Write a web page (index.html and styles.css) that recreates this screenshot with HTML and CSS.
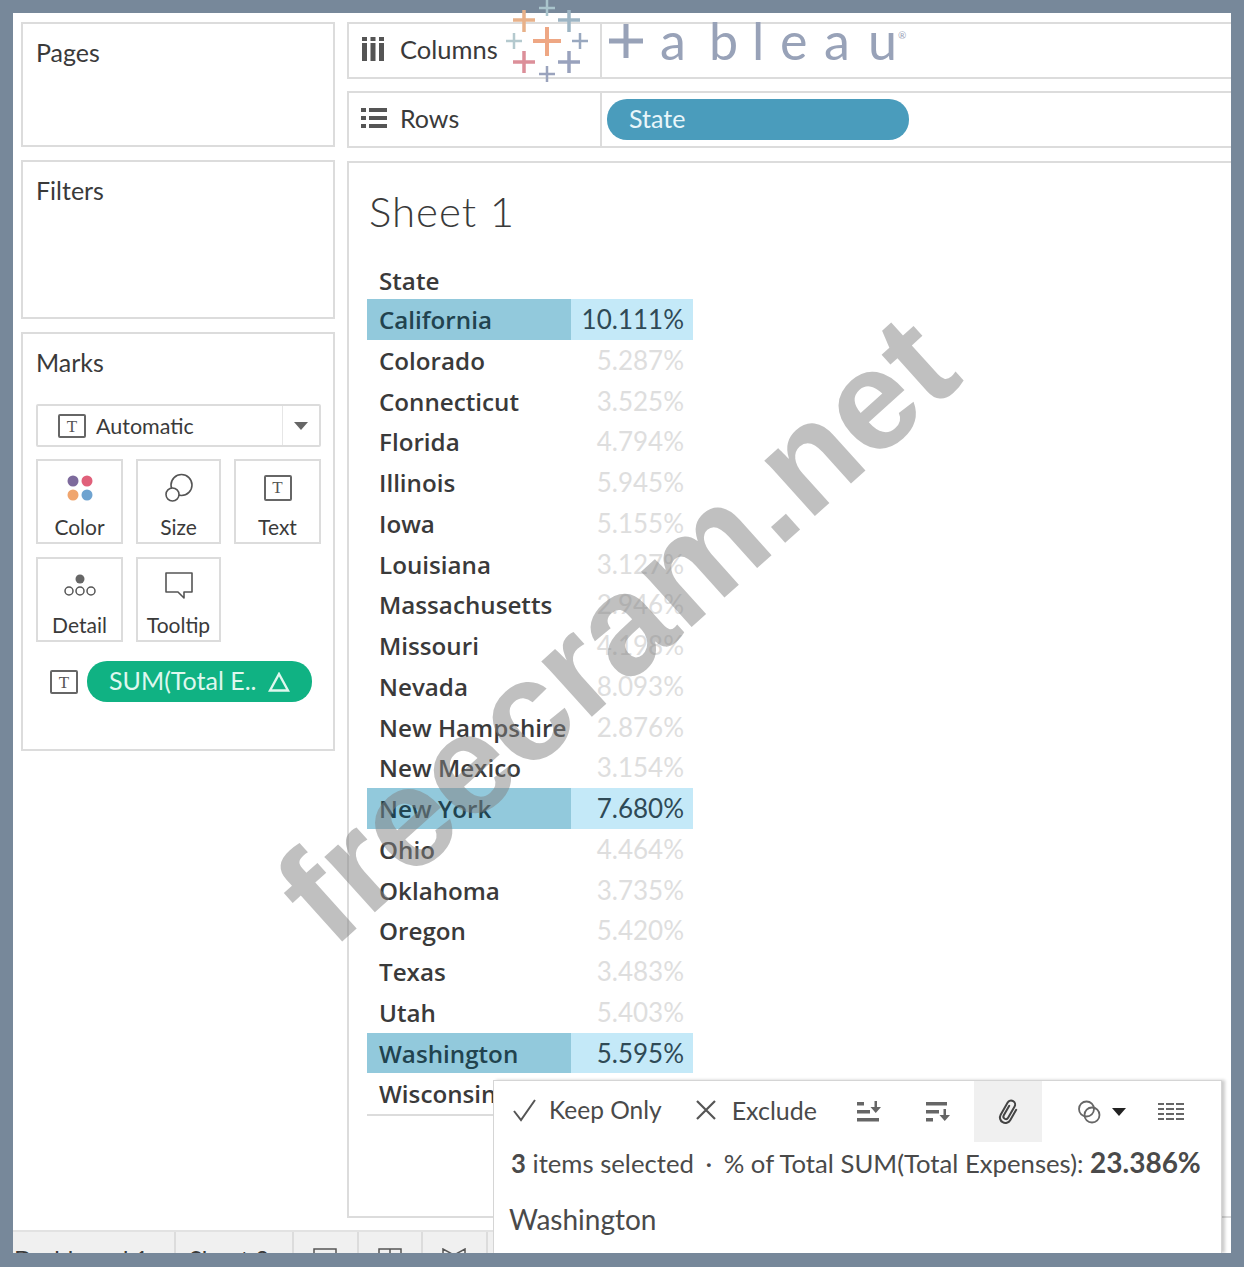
FILE: index.html

```html
<!DOCTYPE html>
<html>
<head>
    <meta charset="utf-8">
    <title>Sheet 1</title>
    <link rel="stylesheet" href="styles.css">
</head>
<body>
    <div class="frame">
        <div class="workspace">
            <div class="side">
                <div class="card pages-card"><div class="card-title">Pages</div></div>
                <div class="card filters-card"><div class="card-title">Filters</div></div>
                <div class="card marks-card">
                    <div class="card-title">Marks</div>
                    <div class="mark-select">
                        <div class="mark-select-label">
                            <span class="t-icon">T</span>
                            <span>Automatic</span>
                        </div>
                        <div class="mark-select-arrow"><span class="caret"></span></div>
                    </div>
                    <div class="mark-grid">
                        <div class="mark-btn">
                            <svg width="30" height="30" viewBox="0 0 30 30">
                                <circle cx="8" cy="8" r="5.5" fill="#7d6a9c"/>
                                <circle cx="22" cy="8" r="5.5" fill="#e0607a"/>
                                <circle cx="8" cy="22" r="5.5" fill="#f0a56e"/>
                                <circle cx="22" cy="22" r="5.5" fill="#6fa3d0"/>
                            </svg>
                            <span>Color</span>
                        </div>
                        <div class="mark-btn">
                            <svg width="30" height="30" viewBox="0 0 30 30" fill="none" stroke="#555" stroke-width="1.6">
                                <circle cx="17.5" cy="12" r="10.5"/>
                                <circle cx="8.5" cy="21.5" r="6.5" fill="#fff"/>
                            </svg>
                            <span>Size</span>
                        </div>
                        <div class="mark-btn">
                            <span class="t-icon">T</span>
                            <span>Text</span>
                        </div>
                        <div class="mark-btn">
                            <svg width="34" height="30" viewBox="0 0 34 30" fill="none" stroke="#555" stroke-width="1.5">
                                <circle cx="17" cy="8" r="4.5" fill="#666" stroke="none"/>
                                <circle cx="6" cy="20" r="4"/>
                                <circle cx="17" cy="20" r="4"/>
                                <circle cx="28" cy="20" r="4"/>
                            </svg>
                            <span>Detail</span>
                        </div>
                        <div class="mark-btn">
                            <svg width="30" height="30" viewBox="0 0 30 30" fill="none" stroke="#555" stroke-width="1.6">
                                <path d="M2 2h26v19h-8v6l-6-6H2z" stroke-linejoin="round"/>
                            </svg>
                            <span>Tooltip</span>
                        </div>
                    </div>
                    <div class="mark-pill-row">
                        <span class="t-icon">T</span>
                        <div class="pill pill-green">
                            <span>SUM(Total E..</span>
                            <svg width="22" height="20" viewBox="0 0 22 20" fill="none" stroke="#dff7ee" stroke-width="2.4">
                                <path d="M11 2 20 18.5H2z"/>
                            </svg>
                        </div>
                    </div>
                </div>
            </div>

            <div class="main">
                <div class="shelf columns-shelf">
                    <div class="shelf-label">
                        <svg width="24" height="26" viewBox="0 0 24 26" fill="#555">
                            <rect x="1" y="1" width="5" height="4"/><rect x="1" y="7" width="5" height="18"/>
                            <rect x="9.5" y="1" width="5" height="4"/><rect x="9.5" y="7" width="5" height="18"/>
                            <rect x="18" y="1" width="5" height="4"/><rect x="18" y="7" width="5" height="18"/>
                        </svg>
                        <span>Columns</span>
                    </div>
                </div>
                <div class="shelf rows-shelf">
                    <div class="shelf-label">
                        <svg width="26" height="22" viewBox="0 0 26 22" fill="#555">
                            <rect x="0" y="1" width="5" height="4"/><rect x="8" y="1" width="18" height="4"/>
                            <rect x="0" y="9" width="5" height="4"/><rect x="8" y="9" width="18" height="4"/>
                            <rect x="0" y="17" width="5" height="4"/><rect x="8" y="17" width="18" height="4"/>
                        </svg>
                        <span>Rows</span>
                    </div>
                    <div class="pill pill-blue">State</div>
                </div>

                <div class="sheet">
                    <h1 class="sheet-title">Sheet 1</h1>
                    <div class="state-table">
                        <div class="state-head">State</div>
                        <div class="state-row selected"><span class="state">California</span><span class="val">10.111%</span></div>
                        <div class="state-row"><span class="state">Colorado</span><span class="val">5.287%</span></div>
                        <div class="state-row"><span class="state">Connecticut</span><span class="val">3.525%</span></div>
                        <div class="state-row"><span class="state">Florida</span><span class="val">4.794%</span></div>
                        <div class="state-row"><span class="state">Illinois</span><span class="val">5.945%</span></div>
                        <div class="state-row"><span class="state">Iowa</span><span class="val">5.155%</span></div>
                        <div class="state-row"><span class="state">Louisiana</span><span class="val">3.127%</span></div>
                        <div class="state-row"><span class="state">Massachusetts</span><span class="val">2.946%</span></div>
                        <div class="state-row"><span class="state">Missouri</span><span class="val">4.198%</span></div>
                        <div class="state-row"><span class="state">Nevada</span><span class="val">8.093%</span></div>
                        <div class="state-row"><span class="state">New Hampshire</span><span class="val">2.876%</span></div>
                        <div class="state-row"><span class="state">New Mexico</span><span class="val">3.154%</span></div>
                        <div class="state-row selected"><span class="state">New York</span><span class="val">7.680%</span></div>
                        <div class="state-row"><span class="state">Ohio</span><span class="val">4.464%</span></div>
                        <div class="state-row"><span class="state">Oklahoma</span><span class="val">3.735%</span></div>
                        <div class="state-row"><span class="state">Oregon</span><span class="val">5.420%</span></div>
                        <div class="state-row"><span class="state">Texas</span><span class="val">3.483%</span></div>
                        <div class="state-row"><span class="state">Utah</span><span class="val">5.403%</span></div>
                        <div class="state-row selected"><span class="state">Washington</span><span class="val">5.595%</span></div>
                        <div class="state-row last"><span class="state">Wisconsin</span><span class="val"></span></div>
                    </div>
                </div>
            </div>
        </div>

        <div class="tabs">
            <div class="tab tab-dash">Dashboard 1</div>
            <div class="tab tab-sheet">Sheet 2</div>
            <div class="tab tab-icon">
                <svg width="24" height="12" viewBox="0 0 24 12" fill="none" stroke="#555" stroke-width="1.5"><path d="M1 12V1h22v11"/></svg>
            </div>
            <div class="tab tab-icon">
                <svg width="24" height="12" viewBox="0 0 24 12" fill="none" stroke="#555" stroke-width="1.5"><path d="M1 12V1h22v11M12 1v11M1 6h22"/></svg>
            </div>
            <div class="tab tab-icon">
                <svg width="24" height="12" viewBox="0 0 24 12" fill="none" stroke="#555" stroke-width="1.5"><path d="M1 12V1l11 6 11-6v11"/></svg>
            </div>
        </div>

        <div class="watermark">freecram.net</div>

        <div class="tooltip">
            <div class="tip-bar">
                <div class="tip-action tip-keep">
                    <svg width="26" height="24" viewBox="0 0 26 24" fill="none" stroke="#555" stroke-width="2"><path d="M2 13l7 9L23 2"/></svg>
                    <span>Keep Only</span>
                </div>
                <div class="tip-action tip-exclude">
                    <svg width="24" height="24" viewBox="0 0 24 24" fill="none" stroke="#555" stroke-width="2.2"><path d="M3 3l18 18M21 3L3 21"/></svg>
                    <span>Exclude</span>
                </div>
                <div class="tip-icon sort-asc">
                    <svg width="26" height="24" viewBox="0 0 26 24" fill="#666">
                        <rect x="1" y="2" width="7" height="3.500"/><rect x="1" y="10" width="13" height="3.500"/><rect x="1" y="18" width="22" height="3.500"/>
                        <path d="M18.500 1h2.500v6h4l-5.250 6-5.250-6h4z"/>
                    </svg>
                </div>
                <div class="tip-icon sort-desc">
                    <svg width="26" height="24" viewBox="0 0 26 24" fill="#666">
                        <rect x="1" y="2" width="21" height="3.500"/><rect x="1" y="10" width="13" height="3.500"/><rect x="1" y="18" width="7" height="3.500"/>
                        <path d="M18.500 9h2.500v6h4l-5.250 6-5.250-6h4z"/>
                    </svg>
                </div>
                <div class="tip-icon tip-clip">
                    <svg width="24" height="30" viewBox="0 0 24 30" fill="none" stroke="#444" stroke-width="2" stroke-linecap="round">
                        <path transform="rotate(30 12 15)" d="M10 9v11a2.500 2.500 0 0 0 5 0V7a4 4 0 0 0-8 0v14a5.500 5.500 0 0 0 11 0V9"/>
                    </svg>
                </div>
                <div class="tip-icon tip-group">
                    <svg width="24" height="26" viewBox="0 0 24 26" fill="none" stroke="#666" stroke-width="1.8">
                        <circle cx="9.500" cy="10" r="7.500"/><circle cx="15" cy="16" r="7.500"/>
                    </svg>
                    <span class="caret caret-dark"></span>
                </div>
                <div class="tip-icon tip-table">
                    <svg width="26" height="20" viewBox="0 0 26 20" fill="none" stroke="#666" stroke-width="2">
                        <path d="M0 2h6M8 2h8M18 2h8M0 7h6M8 7h8M18 7h8M0 12h6M8 12h8M18 12h8M0 17h6M8 17h8M18 17h8"/>
                    </svg>
                </div>
            </div>
            <div class="tip-summary">
                <b>3</b> items selected <span class="tip-dot">·</span> % of Total SUM(Total Expenses): <b class="tip-total">23.386%</b>
            </div>
            <div class="tip-name">Washington</div>
        </div>
    </div>

    <!-- logo sits on top of the columns shelf and pokes out over the border -->
    <svg class="logo" width="420" height="90" viewBox="0 0 420 90">
        <g stroke-width="3.5">
            <path d="M47 0v16M39 8h16" stroke="#a9c4cc" stroke-width="2.5"/>
            <path d="M24 10v22M13 20h22" stroke="#e8b189"/>
            <path d="M69 10v22M58 20h22" stroke="#9db5c4"/>
            <path d="M47 27v29M33 41h28" stroke="#eea784" stroke-width="4"/>
            <path d="M14 33v16M6 41h16" stroke="#b4c9ce" stroke-width="2.5"/>
            <path d="M80 33v16M72 41h16" stroke="#99a8bf" stroke-width="2.5"/>
            <path d="M24 51v22M13 62h22" stroke="#dc8f99"/>
            <path d="M69 51v22M58 62h22" stroke="#99a2bd"/>
            <path d="M47 66v16M39 74h16" stroke="#9aa3bd" stroke-width="2.5"/>
            <path d="M126 24v34M109 41h34" stroke="#98a2b8" stroke-width="5"/>
        </g>
        <text class="logo-word" x="160 209 252 280 324 368" y="60">ableau</text>
        <text class="logo-reg" x="398" y="39">®</text>
    </svg>
</body>
</html>
```

FILE: styles.css

```css
:root {
    --slate: #77889a;
    --line: #dcdcdc;
    --ink: #3a3a3a;
    --tip-ink: #4a4a4a;
    --sel-dark: #92c9dc;
    --sel-light: #c4e9f8;
}

html, body {
    margin: 0;
    padding: 0;
}

body {
    background-color: var(--slate);
    font-family: 'Lato', sans-serif;
    color: var(--ink);
    padding: 13px 13px 14px 13px;
    height: 1240px;
}

.frame {
    position: relative;
    width: 1218px;
    height: 1240px;
    background-color: #fff;
    overflow: hidden;
}

.workspace {
    display: flex;
    gap: 12px;
    padding: 9px 0 0 8px;
    height: 1208px;
    box-sizing: border-box;
}

.side {
    width: 314px;
    flex-shrink: 0;
    display: flex;
    flex-direction: column;
    gap: 13px;
}

.card {
    border: 2px solid var(--line);
    box-sizing: border-box;
    padding: 13px 13px;
}

.card-title {
    font-size: 25px;
    line-height: 30px;
}

.pages-card { height: 125px; }
.filters-card { height: 159px; }
.marks-card { height: 419px; }

.mark-select {
    display: flex;
    height: 43px;
    margin-top: 27px;
    width: 285px;
    border: 2px solid var(--line);
    border-radius: 2px;
    box-sizing: border-box;
}

.mark-select-label {
    flex: 1;
    display: flex;
    align-items: center;
    gap: 10px;
    padding-left: 20px;
    font-size: 21.5px;
    border-right: 1px solid #e6e6e6;
}

.mark-select-arrow {
    width: 36px;
    display: flex;
    align-items: center;
    justify-content: center;
}

.caret {
    width: 0;
    height: 0;
    border-left: 7px solid transparent;
    border-right: 7px solid transparent;
    border-top: 8px solid #666;
}

.caret-dark {
    border-top-color: #222;
}

.t-icon {
    display: inline-block;
    width: 28px;
    height: 24px;
    line-height: 21px;
    border: 2px solid #666;
    border-radius: 2px;
    box-sizing: border-box;
    text-align: center;
    font-family: 'Liberation Serif', serif;
    font-size: 17px;
    color: #555;
}

.mark-grid {
    display: grid;
    grid-template-columns: 87px 85px 87px;
    grid-auto-rows: 85px;
    gap: 13px 13px;
    margin-top: 12px;
}

.mark-btn {
    border: 2px solid var(--line);
    box-sizing: border-box;
    display: flex;
    flex-direction: column;
    align-items: center;
    justify-content: flex-start;
    padding-top: 12px;
    font-size: 21px;
}

.mark-btn svg, .mark-btn .t-icon {
    height: 30px;
    margin-bottom: 11px;
}

.mark-btn .t-icon {
    height: 26px;
    margin-top: 2px;
    margin-bottom: 13px;
}

.mark-btn > span:last-child {
    line-height: 26px;
}

.mark-pill-row {
    display: flex;
    align-items: center;
    gap: 9px;
    margin: 19px 0 0 14px;
}

.pill {
    display: flex;
    align-items: center;
    border-radius: 20px;
    height: 41px;
    box-sizing: border-box;
    font-size: 25px;
    padding-bottom: 3px;
}

.pill-green {
    width: 225px;
    background-color: #10b283;
    color: #dff7ee;
    padding-left: 22px;
    padding-right: 22px;
    justify-content: space-between;
}

.pill-green svg {
    margin-top: 3px;
}

.pill-blue {
    width: 302px;
    background-color: #4a9cbc;
    color: #e8f6fa;
    padding-left: 22px;
    margin-left: 5px;
}

.main {
    flex: 1;
    min-width: 0;
    display: flex;
    flex-direction: column;
    margin-right: -4px;
}

.shelf {
    display: flex;
    align-items: center;
    height: 57px;
    border: 2px solid var(--line);
    box-sizing: border-box;
}

.rows-shelf {
    margin-top: 12px;
}

.shelf-label {
    width: 253px;
    height: 100%;
    display: flex;
    align-items: center;
    gap: 15px;
    padding-left: 12px;
    padding-bottom: 4px;
    box-sizing: border-box;
    border-right: 2px solid var(--line);
    font-size: 25.5px;
    flex-shrink: 0;
}

.rows-shelf .shelf-label {
    gap: 13px;
    font-size: 25px;
}

.sheet {
    margin-top: 13px;
    height: 1057px;
    border: 2px solid var(--line);
    box-sizing: border-box;
    padding: 0 0 0 18px;
}

.sheet-title {
    font-size: 42px;
    font-weight: 300;
    line-height: 50px;
    margin: 23px 0 0 2px;
    letter-spacing: 1px;
}

.state-table {
    width: 326px;
    margin-top: 23px;
    font-family: 'Open Sans', sans-serif;
    font-size: 24.2px;
    font-weight: 600;
    color: #3a3a3a;
}

.state-head {
    padding-left: 12px;
    height: 40px;
    line-height: 43px;
}

.state-row {
    display: flex;
    height: 40.75px;
    line-height: 41px;
}

.state {
    width: 204px;
    padding-left: 12px;
    box-sizing: border-box;
    white-space: nowrap;
}

.val {
    width: 122px;
    padding-right: 9px;
    box-sizing: border-box;
    text-align: right;
    font-family: 'Lato', sans-serif;
    font-weight: 400;
    font-size: 26px;
    color: #dedede;
}

.selected .state {
    background-color: var(--sel-dark);
    color: #21434f;
}

.selected .val {
    background-color: var(--sel-light);
    color: #2f4a56;
}

.last {
    border-bottom: 2px solid var(--line);
}

.tabs {
    display: flex;
    position: absolute;
    left: 0;
    right: 728px;
    bottom: 0;
    height: 23px;
    background-color: #f0f0f0;
    border-top: 2px solid #e2e2e2;
    box-sizing: border-box;
    overflow: hidden;
}

.tab {
    border-right: 2px solid #dcdcdc;
    box-sizing: border-box;
    font-size: 24px;
    padding-top: 13px;
    line-height: 28px;
    white-space: nowrap;
    overflow: hidden;
}

.tab-dash { width: 163px; text-indent: 1px; }
.tab-sheet { width: 118px; padding-left: 13px; }
.tab-icon {
    width: 64.5px;
    display: flex;
    justify-content: center;
    padding-top: 16px;
}

.logo {
    position: absolute;
    left: 500px;
    top: 0;
}

.logo-word {
    font-family: 'Lato', sans-serif;
    font-size: 52px;
    fill: #98a2b8;
}

.logo-reg {
    font-family: 'Lato', sans-serif;
    font-size: 10px;
    fill: #98a2b8;
}

.watermark {
    position: absolute;
    left: 177px;
    top: 545px;
    font-family: 'Liberation Sans', sans-serif;
    font-weight: bold;
    font-size: 142px;
    line-height: 1;
    white-space: nowrap;
    color: rgba(130, 130, 130, 0.5);
    transform: rotate(-42deg);
}

.tooltip {
    position: absolute;
    left: 480px;
    top: 1067px;
    width: 729px;
    height: 173px;
    background-color: #fff;
    border: 1px solid #d5d5d5;
    border-bottom: 0;
    box-shadow: 3px 0 3px rgba(0, 0, 0, 0.2);
    box-sizing: border-box;
    color: var(--tip-ink);
}

.tip-bar {
    display: flex;
    align-items: center;
    height: 61px;
    padding-left: 18px;
}

.tip-action {
    display: flex;
    align-items: center;
    gap: 11px;
    font-size: 25px;
    padding-bottom: 4px;
}

.tip-keep {
    font-size: 24.5px;
}

.tip-exclude {
    margin-left: 32px;
    gap: 14px;
}

.tip-icon {
    display: flex;
    align-items: center;
    justify-content: center;
    height: 100%;
}

.sort-asc { margin-left: 39px; }
.sort-desc { margin-left: 43px; }

.tip-clip {
    width: 68px;
    margin-left: 23px;
    background-color: #f0f0f0;
}

.tip-group {
    margin-left: 35px;
    gap: 11px;
}

.tip-table { margin-left: 32px; }

.tip-summary {
    font-size: 25.7px;
    line-height: 32px;
    padding-left: 17px;
    margin-top: 4px;
    white-space: nowrap;
}

.tip-dot {
    margin: 0 5px;
}

.tip-total {
    font-size: 28px;
}

.tip-name {
    font-size: 28px;
    line-height: 34px;
    padding-left: 15px;
    margin-top: 23px;
}
```
